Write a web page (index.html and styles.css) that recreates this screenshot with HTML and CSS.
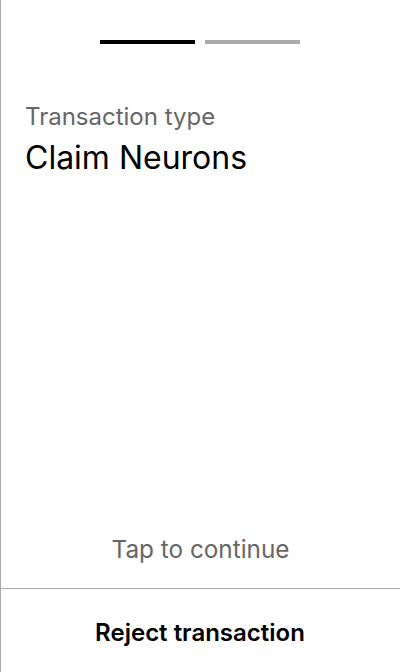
FILE: index.html
```html
<!DOCTYPE html>
<html>
<head>
<meta charset="utf-8">
<link rel="stylesheet" href="styles.css">
</head>
<body>
<div class="screen">
  <div class="progress">
    <span class="bar active"></span>
    <span class="bar"></span>
  </div>
  <div class="content">
    <div class="label">Transaction type</div>
    <div class="value">Claim Neurons</div>
  </div>
  <div class="hint">Tap to continue</div>
  <div class="footer">Reject transaction</div>
</div>
</body>
</html>
```

FILE: styles.css
```css
html, body {
  margin: 0;
  padding: 0;
  background: #fff;
}
.screen {
  box-sizing: border-box;
  width: 400px;
  height: 672px;
  border-left: 1px solid #aaa;
  display: flex;
  flex-direction: column;
  font-family: Inter, "Noto Sans", sans-serif;
}
.progress {
  display: flex;
  justify-content: center;
  gap: 10px;
  padding-top: 40px;
  margin-left: -1px;
}
.bar {
  width: 95px;
  height: 4px;
  background: #aaa;
}
.bar.active {
  background: #000;
}
.content {
  padding: 57px 0 0 24px;
  flex: 1;
}
.label {
  font-size: 24px;
  color: #666;
  line-height: 32px;
}
.value {
  font-size: 32px;
  color: #000;
  line-height: 40px;
  margin-top: 5px;
}
.hint {
  text-align: center;
  font-size: 24.3px;
  color: #666;
  line-height: 32px;
  padding-bottom: 23px;
}
.footer {
  border-top: 1px solid #aaa;
  height: 79px;
  padding-top: 4px;
  display: flex;
  align-items: center;
  justify-content: center;
  font-size: 24px;
  font-weight: 600;
  color: #000;
  margin-left: -1px;
}
```
